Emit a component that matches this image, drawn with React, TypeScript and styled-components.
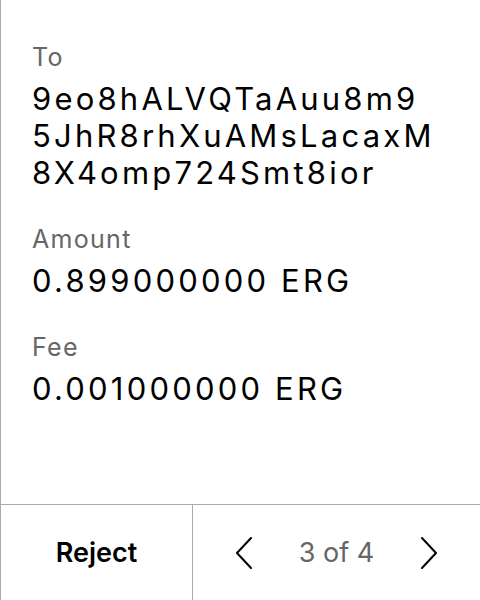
import React from "react";
import styled, { createGlobalStyle } from "styled-components";

const Global = createGlobalStyle`
  html, body { margin: 0; padding: 0; background: #fff; }
  body { font-family: Inter, "Noto Sans", sans-serif; }
`;

const Page = styled.div`
  width: 480px;
  height: 600px;
  box-sizing: border-box;
  border-left: 1px solid #aaaaaa;
  display: flex;
  flex-direction: column;
  color: #000;
`;

const Content = styled.div`
  flex: 1;
  padding: 42px 0 0 31px;
  display: flex;
  flex-direction: column;
  gap: 33px;
`;

const Field = styled.div`
  display: flex;
  flex-direction: column;
  gap: 8px;
`;

const Label = styled.div`
  font-size: 25px;
  line-height: 30px;
  letter-spacing: 1.3px;
  color: #666666;
`;

const Value = styled.div`
  font-size: 31px;
  line-height: 37px;
  letter-spacing: 3.2px;
  white-space: nowrap;
`;

const ValueLine = styled.span`
  display: block;
`;

const Footer = styled.div`
  height: 96px;
  box-sizing: border-box;
  border-top: 1px solid #aaaaaa;
  display: flex;
`;

const RejectCell = styled.div`
  width: 191px;
  border-right: 1px solid #aaaaaa;
  display: flex;
  align-items: center;
  justify-content: center;
  font-size: 27px;
  font-weight: 600;
`;

const Pager = styled.div`
  flex: 1;
  display: flex;
  align-items: center;
  justify-content: center;
  gap: 47px;
`;

const PageText = styled.span`
  font-size: 27px;
  color: #666666;
`;

const Chevron = ({ dir }: { dir: "left" | "right" }) => (
  <svg width="16" height="32" viewBox="0 0 16 32" fill="none">
    <path
      d={dir === "left" ? "M15 1 L1 16 L15 31" : "M1 1 L15 16 L1 31"}
      stroke="#000"
      strokeWidth="2"
      strokeLinecap="round"
      strokeLinejoin="round"
    />
  </svg>
);

const address = ["9eo8hALVQTaAuu8m9", "5JhR8rhXuAMsLacaxM", "8X4omp724Smt8ior"];

export default function App() {
  return (
    <>
      <Global />
      <Page>
        <Content>
          <Field>
            <Label>To</Label>
            <Value>
              {address.map((line) => (
                <ValueLine key={line}>{line}</ValueLine>
              ))}
            </Value>
          </Field>
          <Field>
            <Label>Amount</Label>
            <Value>0.899000000 ERG</Value>
          </Field>
          <Field>
            <Label>Fee</Label>
            <Value>0.001000000 ERG</Value>
          </Field>
        </Content>
        <Footer>
          <RejectCell>Reject</RejectCell>
          <Pager>
            <Chevron dir="left" />
            <PageText>3 of 4</PageText>
            <Chevron dir="right" />
          </Pager>
        </Footer>
      </Page>
    </>
  );
}
